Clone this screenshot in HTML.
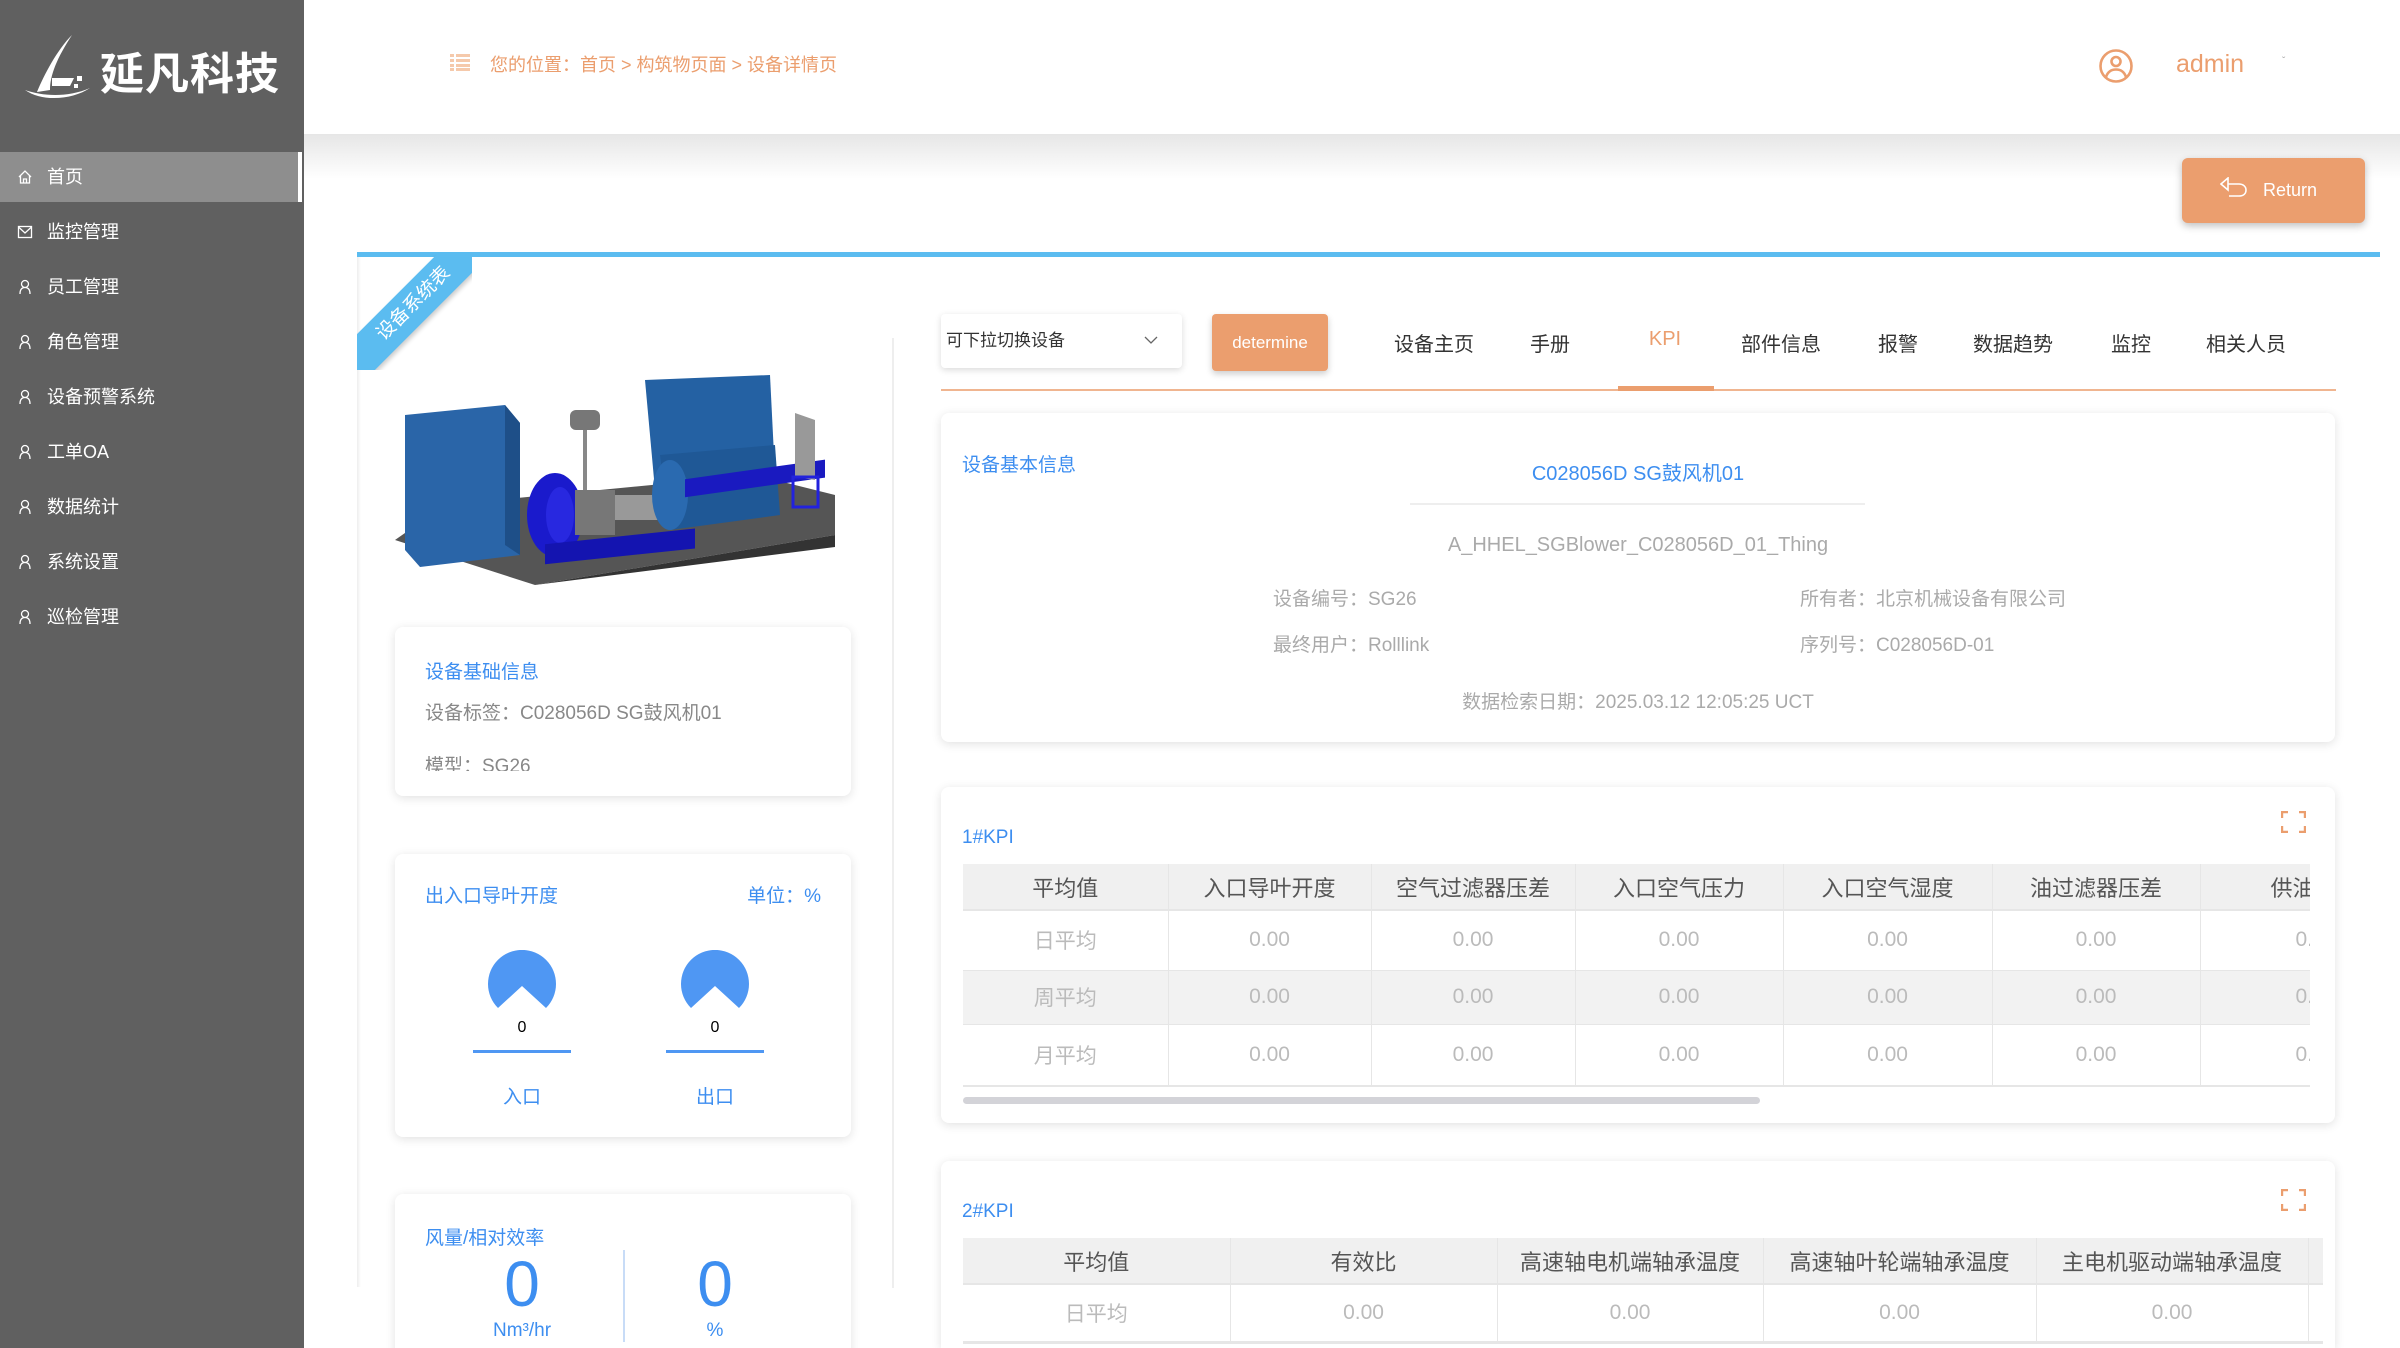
<!DOCTYPE html>
<html style="width:2400px;height:1348px;overflow:hidden"><head><meta charset="utf-8"><style>
*{margin:0;padding:0;box-sizing:border-box}
body{width:2400px;height:1348px;overflow:hidden;background:#fff;font-family:"Liberation Sans","Noto Sans CJK SC",sans-serif;position:relative}
.abs{position:absolute}
#side{left:0;top:0;width:304px;height:1348px;background:#606060}
.mi{position:absolute;left:0;width:304px;height:50px;color:#fff;font-size:18px;line-height:50px;padding-left:47px}
.mi svg{position:absolute;left:17px;top:17px}
.card{position:absolute;background:#fff;border-radius:8px;box-shadow:0 2px 10px rgba(0,0,0,.12)}
.blue{color:#3d8ef0}
.tab{position:absolute;top:328px;font-size:20px;color:#333;transform:translateX(-50%)}
table{border-collapse:collapse;table-layout:fixed}
td,th{text-align:center;border-right:1px solid #e6e6e6;font-weight:normal;white-space:nowrap;overflow:hidden}
th{background:#f0f0f0;color:#555;font-size:22px;height:46px}
td{color:#bbb;font-size:21px}
</style></head><body>
<div id="side" class="abs">
 <svg class="abs" style="left:22px;top:30px" width="75" height="70" viewBox="0 0 75 70"><path d="M50 5 C35 20 22 45 15 62 L28 60 C28 45 35 28 50 5Z" fill="#fff"/><path d="M30 48 L52 48 L48 56 L30 56Z" fill="#fff"/><path d="M3 60 C20 66 45 68 68 58 C50 70 20 72 3 60Z" fill="#fff"/><rect x="55" y="46" width="5" height="5" fill="#fff"/><rect x="52" y="54" width="4" height="4" fill="#fff"/></svg>
 <div class="abs" style="left:100px;top:38px;color:#fff;font-size:44px;font-weight:bold;letter-spacing:1px">延凡科技</div>
 <div class="abs" style="left:0;top:152px;width:300px;height:50px;background:#8e8e8e"></div>
 <div class="abs" style="left:298px;top:152px;width:4px;height:50px;background:#fff"></div>
 <div class="mi" style="top:152px"><svg width="16" height="16" viewBox="0 0 16 16" fill="none" stroke="#fff" stroke-width="1.3"><path d="M2 8 L8 2 L14 8 M3.5 7 V14 H12.5 V7 M6.5 14 V10 H9.5 V14"/></svg>首页</div>
 <div class="mi" style="top:207px"><svg width="16" height="16" viewBox="0 0 16 16" fill="none" stroke="#fff" stroke-width="1.3"><rect x="1.5" y="2.5" width="13" height="11"/><path d="M1.5 3 L8 9 L14.5 3"/></svg>监控管理</div>
 <div class="mi" style="top:262px"><svg width="16" height="16" viewBox="0 0 16 16" fill="none" stroke="#fff" stroke-width="1.3"><circle cx="8" cy="5" r="3.5"/><path d="M3 15 C3 10 5 8.5 8 8.5 C11 8.5 13 10 13 15"/></svg>员工管理</div>
 <div class="mi" style="top:317px"><svg width="16" height="16" viewBox="0 0 16 16" fill="none" stroke="#fff" stroke-width="1.3"><circle cx="8" cy="5" r="3.5"/><path d="M3 15 C3 10 5 8.5 8 8.5 C11 8.5 13 10 13 15"/></svg>角色管理</div>
 <div class="mi" style="top:372px"><svg width="16" height="16" viewBox="0 0 16 16" fill="none" stroke="#fff" stroke-width="1.3"><circle cx="8" cy="5" r="3.5"/><path d="M3 15 C3 10 5 8.5 8 8.5 C11 8.5 13 10 13 15"/></svg>设备预警系统</div>
 <div class="mi" style="top:427px"><svg width="16" height="16" viewBox="0 0 16 16" fill="none" stroke="#fff" stroke-width="1.3"><circle cx="8" cy="5" r="3.5"/><path d="M3 15 C3 10 5 8.5 8 8.5 C11 8.5 13 10 13 15"/></svg>工单OA</div>
 <div class="mi" style="top:482px"><svg width="16" height="16" viewBox="0 0 16 16" fill="none" stroke="#fff" stroke-width="1.3"><circle cx="8" cy="5" r="3.5"/><path d="M3 15 C3 10 5 8.5 8 8.5 C11 8.5 13 10 13 15"/></svg>数据统计</div>
 <div class="mi" style="top:537px"><svg width="16" height="16" viewBox="0 0 16 16" fill="none" stroke="#fff" stroke-width="1.3"><circle cx="8" cy="5" r="3.5"/><path d="M3 15 C3 10 5 8.5 8 8.5 C11 8.5 13 10 13 15"/></svg>系统设置</div>
 <div class="mi" style="top:592px"><svg width="16" height="16" viewBox="0 0 16 16" fill="none" stroke="#fff" stroke-width="1.3"><circle cx="8" cy="5" r="3.5"/><path d="M3 15 C3 10 5 8.5 8 8.5 C11 8.5 13 10 13 15"/></svg>巡检管理</div>
</div>
<div class="abs" style="left:304px;top:134px;width:2096px;height:45px;background:linear-gradient(#e6e6e6,#fff)"></div>
<svg class="abs" style="left:450px;top:54px" width="20" height="17"><g fill="#f5c9ab"><rect x="0" y="0" width="4" height="3"/><rect x="6" y="0" width="14" height="3"/><rect x="0" y="5" width="4" height="3"/><rect x="6" y="5" width="14" height="3"/><rect x="0" y="10" width="4" height="3"/><rect x="6" y="10" width="14" height="3"/><rect x="0" y="14" width="4" height="3"/><rect x="6" y="14" width="14" height="3"/></g></svg>
<div class="abs" style="left:490px;top:51px;font-size:18px;color:#eb9e6e">您的位置：首页 &gt; 构筑物页面 &gt; 设备详情页</div>
<svg class="abs" style="left:2098px;top:48px" width="36" height="36" viewBox="0 0 36 36" fill="none" stroke="#eb9e6e" stroke-width="2.6"><circle cx="18" cy="18" r="15.5"/><circle cx="18" cy="13.5" r="4.5"/><path d="M8 29 C10 23 14 21.5 18 21.5 C22 21.5 26 23 28 29"/></svg>
<div class="abs" style="left:2176px;top:50px;font-size:25px;color:#eb9e6e">admin</div>
<div class="abs" style="left:2282px;top:56px;font-size:10px;color:#aaa">ˇ</div>
<div class="abs" style="left:2182px;top:158px;width:183px;height:65px;background:#eb9e6e;border-radius:6px;box-shadow:0 3px 8px rgba(0,0,0,.25);color:#fff;font-size:18px;line-height:65px;padding-left:81px">Return</div>
<svg class="abs" style="left:2220px;top:177px" width="28" height="22" viewBox="0 0 28 22" fill="none" stroke="#fff" stroke-width="1.6"><path d="M1 7 L8 1 V13 Z"/><path d="M8 7 H19 C23 7 26 9.5 26 13 C26 17 23 19 19 19 H9"/></svg>
<div class="abs" style="left:357px;top:252px;width:2023px;height:5px;background:#5bbcf0"></div>
<div class="abs" style="left:357px;top:257px;width:4px;height:1030px;background:linear-gradient(90deg,#eee,#fff)"></div>
<div class="abs" style="left:892px;top:338px;width:2px;height:950px;background:#eee"></div>
<div class="abs" style="left:357px;top:255px;width:115px;height:115px;overflow:hidden">
 <div class="abs" style="left:-48px;top:30px;width:210px;height:38px;background:#5bbcf0;transform:rotate(-45deg);color:#fff;font-size:19px;text-align:center;line-height:38px;box-shadow:0 3px 5px rgba(0,0,0,.2)">设备系统表</div>
</div>
<svg class="abs" style="left:395px;top:355px" width="450" height="230" viewBox="0 0 450 230">
 <polygon points="0,185 140,230 440,180 440,140 360,120 50,150" fill="#555"/>
 <polygon points="140,230 440,180 440,192 140,230" fill="#333"/>
 <polygon points="10,60 110,50 125,68 125,200 25,212 10,195" fill="#2a65a8"/>
 <polygon points="110,50 125,68 125,200 110,190" fill="#1e4f88"/>
 <ellipse cx="160" cy="160" rx="28" ry="42" fill="#1a1acc"/>
 <ellipse cx="165" cy="160" rx="14" ry="28" fill="#2828e0"/>
 <rect x="150" y="205" width="150" height="20" fill="#1414b0" transform="skewY(-6)"/>
 <rect x="180" y="135" width="40" height="45" fill="#777"/>
 <rect x="220" y="140" width="45" height="25" fill="#999"/>
 <rect x="175" y="55" width="30" height="20" rx="6" fill="#777"/>
 <rect x="188" y="75" width="4" height="60" fill="#888"/>
 <polygon points="250,25 375,20 380,120 260,135" fill="#2461a3"/>
 <polygon points="265,100 380,90 385,160 275,175" fill="#1f5896"/>
 <ellipse cx="275" cy="140" rx="18" ry="35" fill="#2a6ab0"/>
 <rect x="290" y="165" width="140" height="18" fill="#1a1ac0" transform="skewY(-8)"/>
 <polygon points="400,58 420,65 420,125 400,122" fill="#999"/>
 <rect x="398" y="122" width="25" height="30" fill="none" stroke="#2222dd" stroke-width="3"/>
</svg>
<div class="card" style="left:395px;top:627px;width:456px;height:169px">
 <div class="abs blue" style="left:30px;top:30px;font-size:19px">设备基础信息</div>
 <div class="abs" style="left:30px;top:71px;font-size:19px;color:#888">设备标签：C028056D SG鼓风机01</div>
 <div class="abs" style="left:30px;top:124px;font-size:19px;color:#888;height:20px;overflow:hidden">模型：SG26</div>
</div>
<div class="card" style="left:395px;top:854px;width:456px;height:283px">
 <div class="abs blue" style="left:30px;top:27px;font-size:19px">出入口导叶开度</div>
 <div class="abs blue" style="right:30px;top:27px;font-size:19px">单位：%</div>
 <svg class="abs" style="left:93px;top:96px" width="68" height="60" viewBox="0 0 68 60"><path d="M10 58 A34 34 0 1 1 58 58 L34 36 Z" fill="#4f97f3"/></svg>
 <svg class="abs" style="left:286px;top:96px" width="68" height="60" viewBox="0 0 68 60"><path d="M10 58 A34 34 0 1 1 58 58 L34 36 Z" fill="#4f97f3"/></svg>
 <div class="abs" style="left:78px;top:165px;width:98px;text-align:center;font-size:16px;color:#000">0</div>
 <div class="abs" style="left:271px;top:165px;width:98px;text-align:center;font-size:16px;color:#000">0</div>
 <div class="abs" style="left:78px;top:196px;width:98px;height:3px;background:#4f97f3"></div>
 <div class="abs" style="left:271px;top:196px;width:98px;height:3px;background:#4f97f3"></div>
 <div class="abs blue" style="left:78px;top:228px;width:98px;text-align:center;font-size:19px">入口</div>
 <div class="abs blue" style="left:271px;top:228px;width:98px;text-align:center;font-size:19px">出口</div>
</div>
<div class="card" style="left:395px;top:1194px;width:456px;height:170px">
 <div class="abs blue" style="left:30px;top:29px;font-size:19px">风量/相对效率</div>
 <div class="abs blue" style="left:77px;top:55px;width:100px;text-align:center;font-size:64px;line-height:70px">0</div>
 <div class="abs blue" style="left:270px;top:55px;width:100px;text-align:center;font-size:64px;line-height:70px">0</div>
 <div class="abs blue" style="left:57px;top:126px;width:140px;text-align:center;font-size:19px">Nm³/hr</div>
 <div class="abs blue" style="left:270px;top:126px;width:100px;text-align:center;font-size:19px">%</div>
 <div class="abs" style="left:228px;top:56px;width:2px;height:92px;background:#c8dcf7"></div>
</div>
<div class="abs" style="left:941px;top:314px;width:241px;height:54px;background:#fff;border-radius:4px;box-shadow:0 2px 7px rgba(0,0,0,.15);font-size:17px;color:#333;line-height:54px;padding-left:5px">可下拉切换设备</div>
<svg class="abs" style="left:1144px;top:336px" width="14" height="9"><path d="M1 1 L7 7 L13 1" fill="none" stroke="#666" stroke-width="1.3"/></svg>
<div class="abs" style="left:1212px;top:314px;width:116px;height:57px;background:#eb9e6e;border-radius:4px;box-shadow:0 3px 7px rgba(0,0,0,.2);color:#fff;font-size:17px;line-height:57px;text-align:center">determine</div>
<div class="tab" style="left:1434px">设备主页</div>
<div class="tab" style="left:1550px">手册</div>
<div class="tab" style="left:1665px;color:#eb9e6e">KPI</div>
<div class="tab" style="left:1781px">部件信息</div>
<div class="tab" style="left:1898px">报警</div>
<div class="tab" style="left:2013px">数据趋势</div>
<div class="tab" style="left:2131px">监控</div>
<div class="tab" style="left:2246px">相关人员</div>
<div class="abs" style="left:941px;top:389px;width:1395px;height:2px;background:#f0b590"></div>
<div class="abs" style="left:1618px;top:386px;width:96px;height:5px;background:#eb9e6e"></div>
<div class="card" style="left:941px;top:413px;width:1394px;height:329px">
 <div class="abs blue" style="left:21px;top:37px;font-size:19px">设备基本信息</div>
 <div class="abs blue" style="left:0;top:44px;width:1394px;text-align:center;font-size:20px">C028056D SG鼓风机01</div>
 <div class="abs" style="left:469px;top:90px;width:455px;height:2px;background:#eee"></div>
 <div class="abs" style="left:0;top:121px;width:1394px;text-align:center;font-size:20px;color:#aaa">A_HHEL_SGBlower_C028056D_01_Thing</div>
 <div class="abs" style="left:332px;top:171px;font-size:19px;color:#aaa">设备编号：SG26</div>
 <div class="abs" style="left:859px;top:171px;font-size:19px;color:#aaa">所有者：北京机械设备有限公司</div>
 <div class="abs" style="left:332px;top:217px;font-size:19px;color:#aaa">最终用户：Rolllink</div>
 <div class="abs" style="left:859px;top:217px;font-size:19px;color:#aaa">序列号：C028056D-01</div>
 <div class="abs" style="left:0;top:274px;width:1394px;text-align:center;font-size:19px;color:#aaa">数据检索日期：2025.03.12 12:05:25 UCT</div>
</div>
<div class="card" style="left:941px;top:787px;width:1394px;height:336px">
 <div class="abs blue" style="left:21px;top:40px;font-size:19px">1#KPI</div>
 <svg class="abs" style="left:1340px;top:24px" width="25" height="22" fill="none" stroke="#eb9e6e" stroke-width="2.4"><path d="M1 7 V1 H7 M18 1 H24 V7 M1 15 V21 H7 M18 21 H24 V15"/></svg>
 <div class="abs" style="left:22px;top:77px;width:1347px;overflow:hidden">
 <table style="width:1450px">
  <colgroup><col style="width:205px"><col style="width:203px"><col style="width:204px"><col style="width:208px"><col style="width:209px"><col style="width:208px"><col style="width:213px"></colgroup>
  <tr><th>平均值</th><th>入口导叶开度</th><th>空气过滤器压差</th><th>入口空气压力</th><th>入口空气湿度</th><th>油过滤器压差</th><th style="text-align:left;padding-left:70px">供油压力</th></tr>
  <tr style="height:60px;border-top:2px solid #e6e6e6"><td>日平均</td><td>0.00</td><td>0.00</td><td>0.00</td><td>0.00</td><td>0.00</td><td style="text-align:left;padding-left:95px">0.00</td></tr>
  <tr style="height:54px;background:#f2f2f2;border-top:1px solid #e6e6e6"><td>周平均</td><td>0.00</td><td>0.00</td><td>0.00</td><td>0.00</td><td>0.00</td><td style="text-align:left;padding-left:95px">0.00</td></tr>
  <tr style="height:62px;border-top:1px solid #e6e6e6;border-bottom:2px solid #e6e6e6"><td>月平均</td><td>0.00</td><td>0.00</td><td>0.00</td><td>0.00</td><td>0.00</td><td style="text-align:left;padding-left:95px">0.00</td></tr>
 </table></div>
 <div class="abs" style="left:22px;top:310px;width:797px;height:7px;border-radius:4px;background:#d3d3d8"></div>
</div>
<div class="card" style="left:941px;top:1161px;width:1394px;height:187px;border-radius:8px 8px 0 0">
 <div class="abs blue" style="left:21px;top:40px;font-size:19px">2#KPI</div>
 <svg class="abs" style="left:1340px;top:28px" width="25" height="22" fill="none" stroke="#eb9e6e" stroke-width="2.4"><path d="M1 7 V1 H7 M18 1 H24 V7 M1 15 V21 H7 M18 21 H24 V15"/></svg>
 <div class="abs" style="left:22px;top:77px;width:1360px;height:110px;overflow:hidden">
 <table style="width:1400px">
  <colgroup><col style="width:267px"><col style="width:267px"><col style="width:266px"><col style="width:273px"><col style="width:272px"><col style="width:55px"></colgroup>
  <tr><th>平均值</th><th>有效比</th><th>高速轴电机端轴承温度</th><th>高速轴叶轮端轴承温度</th><th>主电机驱动端轴承温度</th><th></th></tr>
  <tr style="height:58px;border-top:2px solid #e6e6e6;border-bottom:3px solid #e6e6e6"><td>日平均</td><td>0.00</td><td>0.00</td><td>0.00</td><td>0.00</td><td></td></tr>
 </table></div>
</div>
</body></html>
